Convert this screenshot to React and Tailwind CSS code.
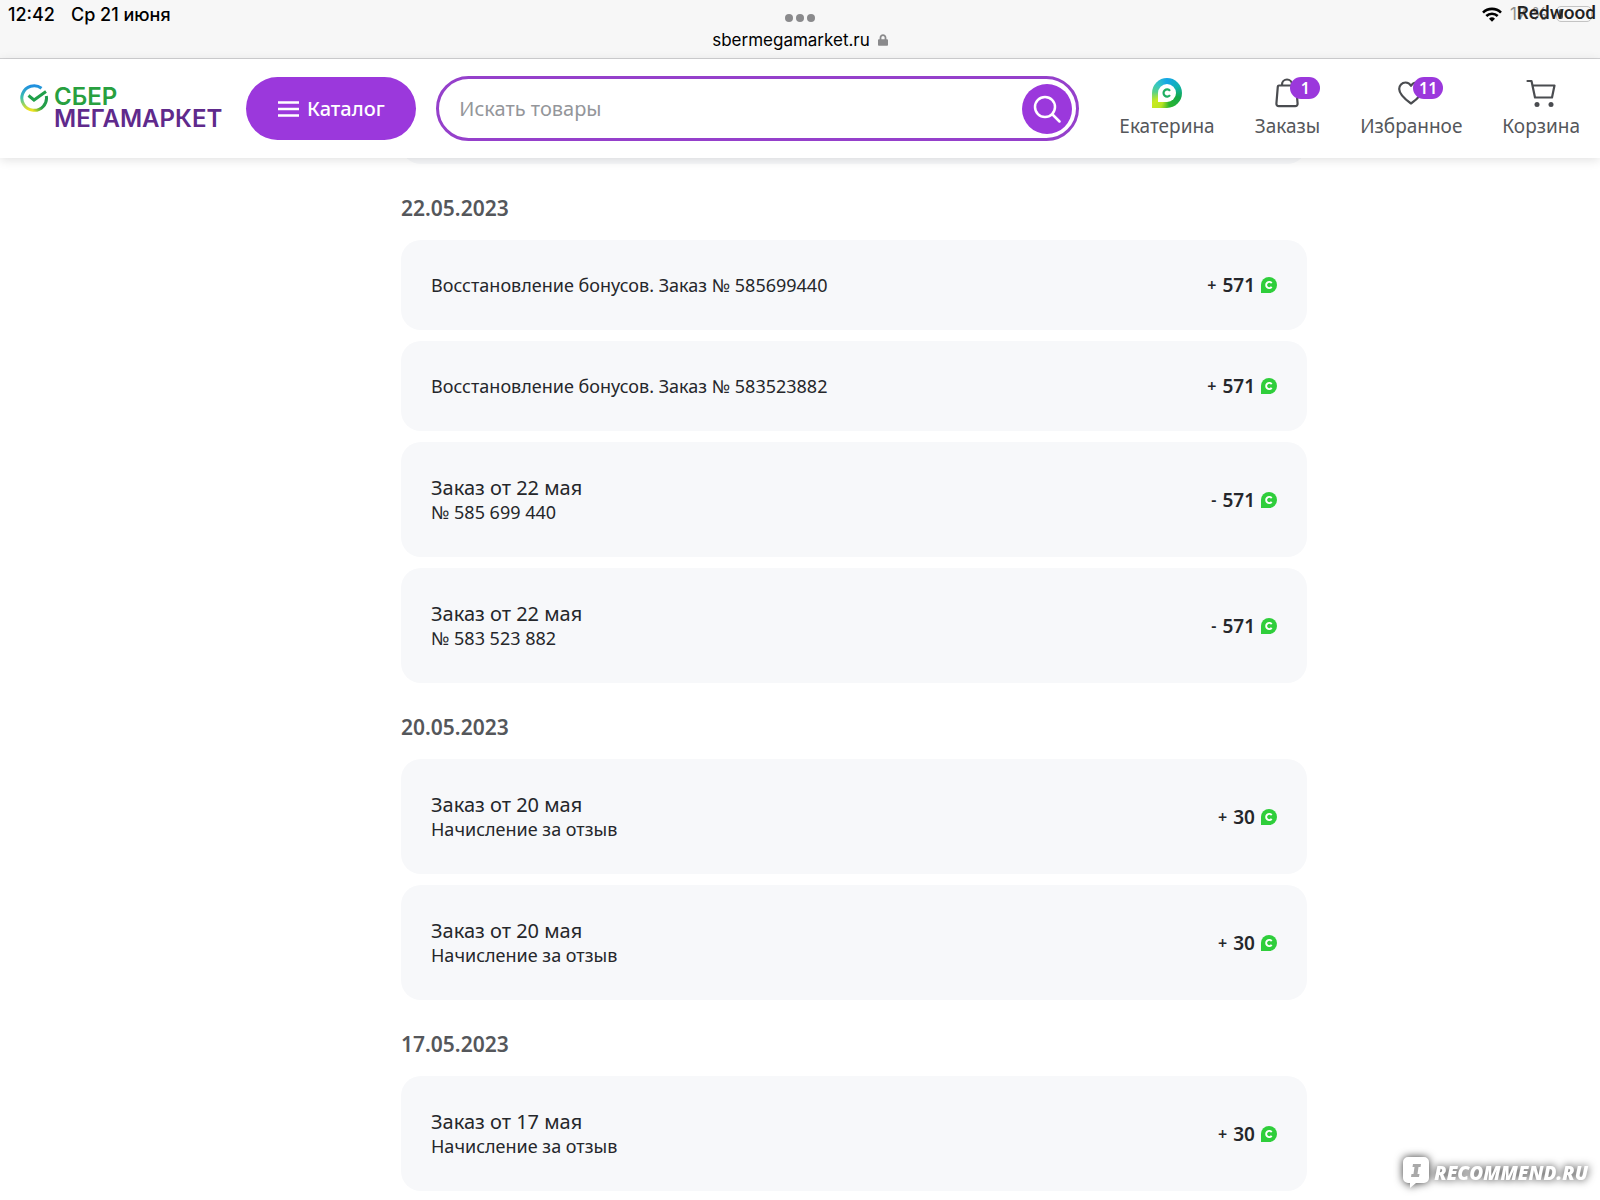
import { useState } from "react";
import { FaLock } from "react-icons/fa";

const groups = [
  {
    date: "22.05.2023",
    items: [
      { id: 1, subtitle: "Восстановление бонусов. Заказ № 585699440", sign: "+", amount: 571 },
      { id: 2, subtitle: "Восстановление бонусов. Заказ № 583523882", sign: "+", amount: 571 },
      { id: 3, title: "Заказ от 22 мая", subtitle: "№ 585 699 440", sign: "-", amount: 571 },
      { id: 4, title: "Заказ от 22 мая", subtitle: "№ 583 523 882", sign: "-", amount: 571 },
    ],
  },
  {
    date: "20.05.2023",
    items: [
      { id: 5, title: "Заказ от 20 мая", subtitle: "Начисление за отзыв", sign: "+", amount: 30 },
      { id: 6, title: "Заказ от 20 мая", subtitle: "Начисление за отзыв", sign: "+", amount: 30 },
    ],
  },
  {
    date: "17.05.2023",
    items: [
      { id: 7, title: "Заказ от 17 мая", subtitle: "Начисление за отзыв", sign: "+", amount: 30 },
    ],
  },
];

function WifiIcon() {
  return (
    <svg viewBox="0 0 20 15" className="h-[15px] w-5" fill="none" stroke="#000" strokeWidth="2.6">
      <path d="M1 5.6a12.8 12.8 0 0 1 18 0" />
      <path d="M4.3 9a8.2 8.2 0 0 1 11.4 0" />
      <path d="M10 14.8l-3-3a4.3 4.3 0 0 1 6 0z" fill="#000" stroke="none" />
    </svg>
  );
}

function StatusBar() {
  return (
    <div className="flex h-[59px] items-start justify-between border-b border-[#d2d2d4] bg-[#f7f7f7] font-['Inter',sans-serif] text-[17px] leading-5 text-black">
      <div className="flex flex-1 gap-4 pt-[5px] pl-2 text-lg leading-5 font-medium">
        <span>12:42</span>
        <span>Ср 21 июня</span>
      </div>
      <div className="flex flex-col items-center gap-2 pt-[14px]">
        <div className="flex gap-[3px]">
          <span className="size-2 rounded-full bg-[#8a8a8c]" />
          <span className="size-2 rounded-full bg-[#8a8a8c]" />
          <span className="size-2 rounded-full bg-[#8a8a8c]" />
        </div>
        <div className="flex items-center gap-2">
          <span>sbermegamarket.ru</span>
          <FaLock className="h-[14px] w-[10px] text-[#8a8a8c]" />
        </div>
      </div>
      <div className="relative flex flex-1 items-center justify-end gap-2 pt-1 pr-2">
        <WifiIcon />
        <span className="text-[#8f8f8f]">17 %</span>
        <span className="flex h-4 w-9 rounded-[5px] border border-[#c4c4c4] p-0.5">
          <span className="w-1 rounded-sm bg-[#555]" />
        </span>
        <span className="absolute top-px right-1 font-['Roboto',sans-serif] text-[19px] leading-6 font-medium text-[#222]">
          Redwood
        </span>
      </div>
    </div>
  );
}

function Logo() {
  return (
    <a href="#" className="flex items-start gap-1.5 pb-1 font-['Inter',sans-serif] text-2xl font-semibold">
      <svg viewBox="0 0 28 28" className="size-7" fill="none" strokeWidth="3">
        <defs>
          <linearGradient id="ringLeft" x1="0" y1="0" x2="0" y2="1">
            <stop offset="0" stopColor="#1f8fe0" />
            <stop offset="0.5" stopColor="#3fc3a8" />
            <stop offset="1" stopColor="#f2e21c" />
          </linearGradient>
          <linearGradient id="ringRight" x1="1" y1="0" x2="0" y2="1">
            <stop offset="0" stopColor="#1c9a4b" />
            <stop offset="0.6" stopColor="#2aa048" />
            <stop offset="1" stopColor="#e3e01e" />
          </linearGradient>
        </defs>
        <path d="M21.5 4.2A12.3 12.3 0 1 0 13 26.3" stroke="url(#ringLeft)" />
        <path d="M13 26.3A12.3 12.3 0 0 0 26.3 12" stroke="url(#ringRight)" />
        <path d="M8.5 11.500l5.500 4.500L26 7.500" stroke="#21a04a" />
      </svg>
      <span className="flex flex-col pt-0.5 leading-[22px]">
        <span className="text-[#28a03f]">СБЕР</span>
        <span className="text-[#5f2a8c]">МЕГАМАРКЕТ</span>
      </span>
    </a>
  );
}

function BonusIcon() {
  return (
    <svg viewBox="0 0 16 16" className="size-4" fill="none">
      <path d="M0 16V8a8 8 0 1 1 8 8z" fill="#2fce3b" />
      <path d="M10.7 6.1A3.1 3.1 0 1 0 10.7 9.9" stroke="#fff" strokeWidth="1.9" />
    </svg>
  );
}

function AvatarIcon() {
  return (
    <span className="flex size-[30px] items-center justify-center rounded-full rounded-bl-none bg-[conic-gradient(#14a5e8,#12b2b0_60deg,#14a84a_110deg,#2bb52e_170deg,#b8e424_205deg,#c9ea1e_235deg,#58d088_275deg,#38c8c0_310deg,#14a5e8)]">
      <svg viewBox="0 0 18 18" className="size-[18px]" fill="none">
        <path d="M0 18V9a9 9 0 1 1 9 9z" fill="#fff" />
        <path d="M12 6.8A3.6 3.6 0 1 0 12 11.2" stroke="#1fae62" strokeWidth="2.2" />
      </svg>
    </span>
  );
}

function BagIcon() {
  return (
    <svg viewBox="0 0 24 30" className="h-[30px] w-6" fill="none" stroke="#4a4c50" strokeWidth="2.2">
      <path d="M4 7.500h16a1.200 1.200 0 0 1 1.200 1.100l1.400 17a2.400 2.400 0 0 1-2.400 2.600H3.800a2.400 2.400 0 0 1-2.400-2.600L2.800 8.600A1.200 1.200 0 0 1 4 7.500z" />
      <path d="M7 7.500V6.500a5 5 0 0 1 10 0v1" />
    </svg>
  );
}

function HeartIcon() {
  return (
    <svg viewBox="0 0 26 24" className="h-6 w-[26px]" fill="none" stroke="#4a4c50" strokeWidth="2.2" strokeLinejoin="round">
      <path d="M13 22.500C6 17.500 1.200 13 1.200 8A6.300 6.300 0 0 1 7.500 1.500c2.400 0 4.400 1.300 5.500 3.300 1.100-2 3.100-3.300 5.500-3.300A6.300 6.300 0 0 1 24.800 8c0 5-4.800 9.500-11.800 14.500z" />
    </svg>
  );
}

function CartIcon() {
  return (
    <svg viewBox="0 0 30 28" className="h-7 w-[30px]" fill="none" stroke="#4a4c50" strokeWidth="2.2" strokeLinejoin="round" strokeLinecap="round">
      <path d="M1.500 2h4l3.500 16.500h17L28.500 6.500H6.500" />
      <circle cx="11" cy="25.500" r="2.500" fill="#4a4c50" stroke="none" />
      <circle cx="25" cy="25.500" r="2.500" fill="#4a4c50" stroke="none" />
    </svg>
  );
}

function NavLink({ label, icon, badge }) {
  return (
    <a href="#" className="flex flex-col items-center gap-1.5 pb-0.5 text-[#55575b]">
      <span className="relative flex h-[30px] items-center">
        {icon}
        {badge && (
          <span className="absolute -top-px left-[15px] flex h-[22px] w-[30px] items-center justify-center rounded-full bg-[#9b38dc] text-base font-semibold text-white">
            {badge}
          </span>
        )}
      </span>
      <span className="text-[19px] leading-6">{label}</span>
    </a>
  );
}

function Header() {
  const [query, setQuery] = useState("");

  return (
    <header className="relative z-10 flex h-[99px] items-center bg-white px-5 shadow-[0_2px_10px_rgba(0,0,0,0.12)]">
      <Logo />
      <button
        type="button"
        className="ml-6 flex h-[63px] w-[170px] shrink-0 items-center justify-center gap-2 rounded-full bg-[#9b38dc] text-xl font-medium text-white"
      >
        <svg viewBox="0 0 21 16" className="h-4 w-[21px]" stroke="#fff" strokeWidth="2.4">
          <path d="M0 1.500h21M0 8h21M0 14.500h21" />
        </svg>
        Каталог
      </button>
      <form
        className="ml-5 flex h-[65px] flex-1 items-center rounded-full border-[3px] border-[#9540cb] pr-1 pl-5"
        onSubmit={(e) => e.preventDefault()}
      >
        <input
          type="text"
          aria-label="Искать товары"
          placeholder="Искать товары"
          value={query}
          onChange={(e) => setQuery(e.target.value)}
          className="min-w-0 flex-1 text-xl text-[#2b2d33] outline-none placeholder:text-[#94969a]"
        />
        <button
          type="submit"
          aria-label="Найти"
          className="flex size-[50px] items-center justify-center rounded-full bg-[#9b38dc]"
        >
          <svg viewBox="0 0 28 28" className="size-7" fill="none" stroke="#fff" strokeWidth="2.5" strokeLinecap="round">
            <circle cx="12" cy="12" r="10" />
            <path d="M19.500 19.500L26.500 26.500" />
          </svg>
        </button>
      </form>
      <nav className="ml-10 flex gap-10">
        <NavLink label="Екатерина" icon={<AvatarIcon />} />
        <NavLink label="Заказы" icon={<BagIcon />} badge="1" />
        <NavLink label="Избранное" icon={<HeartIcon />} badge="11" />
        <NavLink label="Корзина" icon={<CartIcon />} />
      </nav>
    </header>
  );
}

function OperationCard({ title, subtitle, sign, amount }) {
  return (
    <li
      className={`flex items-center justify-between rounded-[20px] bg-[#f7f8fa] px-[30px] text-[#25272b] ${
        title ? "h-[115px]" : "h-[90px]"
      }`}
    >
      <div>
        {title && <p className="text-xl leading-6">{title}</p>}
        <p className="text-lg leading-6">{subtitle}</p>
      </div>
      <p className="flex items-center gap-1.5 text-[19px] leading-6 font-semibold">
        <span className="text-base leading-6">{sign}</span>
        <span>{amount}</span>
        <BonusIcon />
      </p>
    </li>
  );
}

function Watermark() {
  return (
    <div className="fixed right-3 bottom-3 flex items-center gap-1 font-['Open_Sans',sans-serif] text-[19px] leading-6 font-extrabold text-white italic drop-shadow-[0_0_4px_rgba(0,0,0,0.8)]">
      <svg viewBox="0 0 28 31" className="h-[31px] w-7">
        <path d="M6 0h16a5 5 0 0 1 5 5v16a5 5 0 0 1-5 5H14l-6 5v-5H6a5 5 0 0 1-5-5V5a5 5 0 0 1 5-5z" fill="#fff" />
        <path d="M11 7h8l-.5 3h-2l-1 7h2l-.5 3H9l.5-3h2l1-7h-2z" fill="#a9a9a9" />
      </svg>
      RECOMMEND.RU
    </div>
  );
}

export default function App() {
  return (
    <div className="min-h-screen bg-white font-['Noto_Sans',sans-serif]">
      <StatusBar />
      <Header />
      <main className="pr-[293px] pl-[401px]">
        {/* tail of the card that is scrolled under the header */}
        <div className="flex h-1.5 flex-col justify-end overflow-hidden">
          <div className="h-[115px] shrink-0 rounded-[20px] bg-[#f7f8fa]" />
        </div>
        {groups.map((group) => (
          <section key={group.date}>
            <h2 className="pt-8 pb-5 text-[21px] leading-6 font-semibold text-[#55575b]">{group.date}</h2>
            <ul className="flex flex-col gap-[11px]">
              {group.items.map((item) => (
                <OperationCard key={item.id} {...item} />
              ))}
            </ul>
          </section>
        ))}
      </main>
      <Watermark />
    </div>
  );
}
